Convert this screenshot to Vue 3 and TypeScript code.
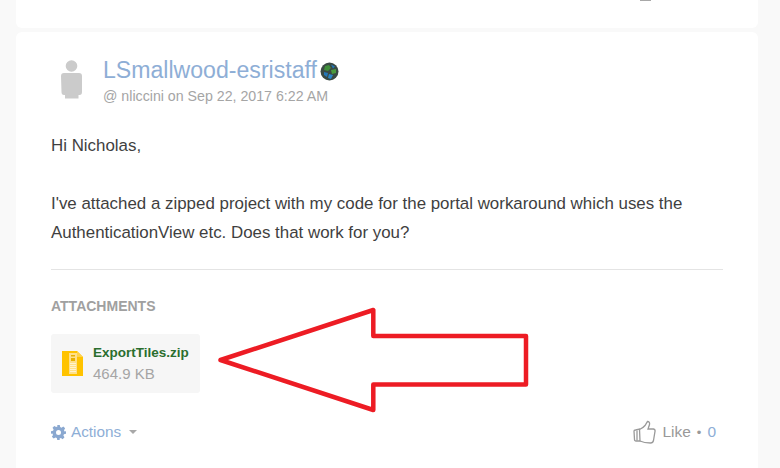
<script setup lang="ts">
const post = {
  author: "LSmallwood-esristaff",
  meta: "@ nliccini on Sep 22, 2017 6:22 AM",
  file: "ExportTiles.zip",
  size: "464.9 KB",
};
</script>

<template>
  <div class="page">
    <div class="card card-top">
      <span class="sliver"></span>
    </div>
    <div class="card post">
      <header class="head">
        <svg class="avatar" width="24" height="40" viewBox="0 0 24 40">
          <circle cx="11.500" cy="7" r="5.800" fill="#cbcbcb" />
          <path d="M1 17 Q1 14 4 14 H19 Q22 14 22 17 V33 Q22 36 19.500 36 H18.500 V39.500 H5 V36 H4 Q1.500 36 1.500 33 Z" fill="#cbcbcb" />
        </svg>
        <div class="who">
          <div class="name-row">
            <a class="name">{{ post.author }}</a>
            <svg class="globe" width="19" height="19" viewBox="0 0 19 19">
              <circle cx="9.500" cy="9.500" r="9" fill="#3a4a44" />
              <path d="M5 4 L9 3 L11 6 L8 9 L4 8 Z" fill="#3f8f3a" />
              <path d="M11 8 L16 7 L16 11 L12 12 Z" fill="#4b9c3e" />
              <path d="M4 10 L8 11 L7 15 L4 13 Z" fill="#2477b8" />
              <path d="M9 12 L13 13 L11 17 L8 16 Z" fill="#2b86c8" />
              <path d="M11 2.500 L15 4.500 L13 6.500 Z" fill="#2477b8" />
            </svg>
          </div>
          <div class="meta">{{ post.meta }}</div>
        </div>
      </header>

      <div class="body">
        <p>Hi Nicholas,</p>
        <p>I've attached a zipped project with my code for the portal workaround which uses the AuthenticationView etc. Does that work for you?</p>
      </div>

      <hr class="rule" />

      <h4 class="att-title">ATTACHMENTS</h4>
      <div class="att">
        <svg class="zip" width="21" height="25" viewBox="0 0 21 25">
          <path d="M0 0 H15 L21 6 V25 H0 Z" fill="#ffc300" />
          <path d="M15 0 L21 6 H15 Z" fill="#ffd24d" />
          <rect x="7" y="2" width="8" height="21" fill="#ffe08a" />
          <rect x="9" y="4" width="4" height="1.500" fill="#e8b000" />
          <rect x="9" y="7" width="4" height="3" fill="#e8b000" />
          <path d="M8 12.500 H14 M8 14.500 H14 M8 16.500 H14 M8 18.500 H14 M8 20.500 H14" stroke="#fff3cf" stroke-width="1" />
        </svg>
        <div>
          <div class="att-name">{{ post.file }}</div>
          <div class="att-size">{{ post.size }}</div>
        </div>
      </div>

      <footer class="foot">
        <a class="actions">
          <svg width="15" height="15" viewBox="0 0 24 24">
            <path fill="#8aa8d0" fill-rule="evenodd" d="M10 0h4l.7 3.300 2.100.9 2.900-1.800 2.900 2.900-1.800 2.900.9 2.100L24 10v4l-3.300.7-.9 2.100 1.800 2.900-2.900 2.900-2.900-1.800-2.100.9L14 24h-4l-.7-3.300-2.100-.9-2.900 1.800-2.900-2.900 1.800-2.900-.9-2.100L0 14v-4l3.300-.7.9-2.100-1.800-2.900 2.900-2.900 2.900 1.800 2.100-.9zM12 8a4 4 0 1 0 0 8 4 4 0 0 0 0-8z" />
          </svg>
          <span>Actions</span>
          <i class="caret"></i>
        </a>
        <div class="like">
          <svg width="23" height="25" viewBox="0 0 23 24" fill="none" stroke="#9a9a9a" stroke-width="1.300">
            <path d="M1 10.500 Q1 9.500 2.500 9.500 L6.500 8.500 L7 20.500 L3 20.500 Q1.500 20.500 1.500 19 Z" />
            <path d="M6.500 9 Q10 7.500 12 5 L14.500 1 Q17 1 16.500 4 L15 8.500 L20.500 8.500 Q22.500 9 22 11 L20.500 20 Q20 22.500 17.500 22.500 Q11 22.500 7 20.500" />
            <path d="M4 10 V20" />
          </svg>
          <span class="like-label">Like</span>
          <span class="dot">•</span>
          <a class="count">0</a>
        </div>
      </footer>

      <svg class="arrow" width="320" height="112" viewBox="0 0 320 112">
        <path d="M5.500 56 L158.300 6 V32 H311 V80.500 H158.300 V106 Z" fill="none" stroke="#ed1c24" stroke-width="4.500" stroke-linejoin="round" />
      </svg>
    </div>
  </div>
</template>

<style>
html,
body {
  margin: 0;
  background: #f9f9f9;
}
</style>

<style scoped>
.page {
  width: 780px;
  height: 468px;
  overflow: hidden;
  padding: 0 22px 0 16px;
  box-sizing: border-box;
  font-family: "Liberation Sans", Arial, sans-serif;
  color: #3f3f3f;
}
.card {
  background: #fff;
  border-radius: 6px;
}
.card-top {
  position: relative;
  height: 28px;
  border-radius: 0 0 6px 6px;
  margin-bottom: 4px;
}
.sliver {
  position: absolute;
  left: 624px;
  top: 0;
  width: 11px;
  height: 1px;
  background: #a8a8a8;
}
.post {
  position: relative;
  height: 460px;
  padding: 24px 35px 0;
}
.head {
  display: flex;
  align-items: flex-start;
}
.avatar {
  margin: 3px 0 0 9px;
}
.who {
  margin-left: 19px;
}
.name-row {
  display: flex;
  align-items: center;
  height: 28px;
}
.name {
  font-size: 23.1px;
  color: #8eaed6;
}
.globe {
  margin: 3px 0 0 3px;
}
.meta {
  margin-top: 2px;
  font-size: 14.2px;
  line-height: 20px;
  color: #a5a5a5;
}
.body {
  margin-top: 25px;
  font-size: 16.9px;
  line-height: 29px;
}
.body p {
  margin: 0 0 29px;
}
.rule {
  margin: -7px 0 0;
  border: 0;
  border-top: 1px solid #e4e4e4;
}
.att-title {
  margin: 28px 0 0;
  font-size: 14px;
  line-height: 16px;
  font-weight: 700;
  color: #a0a0a0;
}
.att {
  display: flex;
  align-items: center;
  gap: 10px;
  width: 149px;
  height: 59px;
  margin-top: 20px;
  padding-left: 11px;
  box-sizing: border-box;
  background: #f6f6f6;
  border-radius: 3px;
}
.att-name {
  font-size: 13.5px;
  line-height: 18px;
  font-weight: 700;
  color: #2a6e2e;
}
.att-size {
  margin-top: 2px;
  font-size: 15px;
  line-height: 20px;
  color: #a5a5a5;
}
.foot {
  display: flex;
  justify-content: space-between;
  align-items: center;
  margin-top: 26px;
  padding-right: 7px;
  height: 26px;
}
.actions {
  display: flex;
  align-items: center;
  gap: 5px;
  font-size: 15.3px;
  color: #8eaed6;
}
.caret {
  margin-left: 3px;
  border: 4px solid transparent;
  border-top: 4px solid #a8a8a8;
  border-bottom: 0;
}
.like {
  display: flex;
  align-items: center;
  font-size: 15.5px;
  color: #999;
}
.like-label {
  margin-left: 6px;
}
.dot {
  margin: 0 6px;
  font-size: 13px;
}
.count {
  color: #8eaed6;
}
.arrow {
  position: absolute;
  left: 199px;
  top: 272px;
}
</style>
